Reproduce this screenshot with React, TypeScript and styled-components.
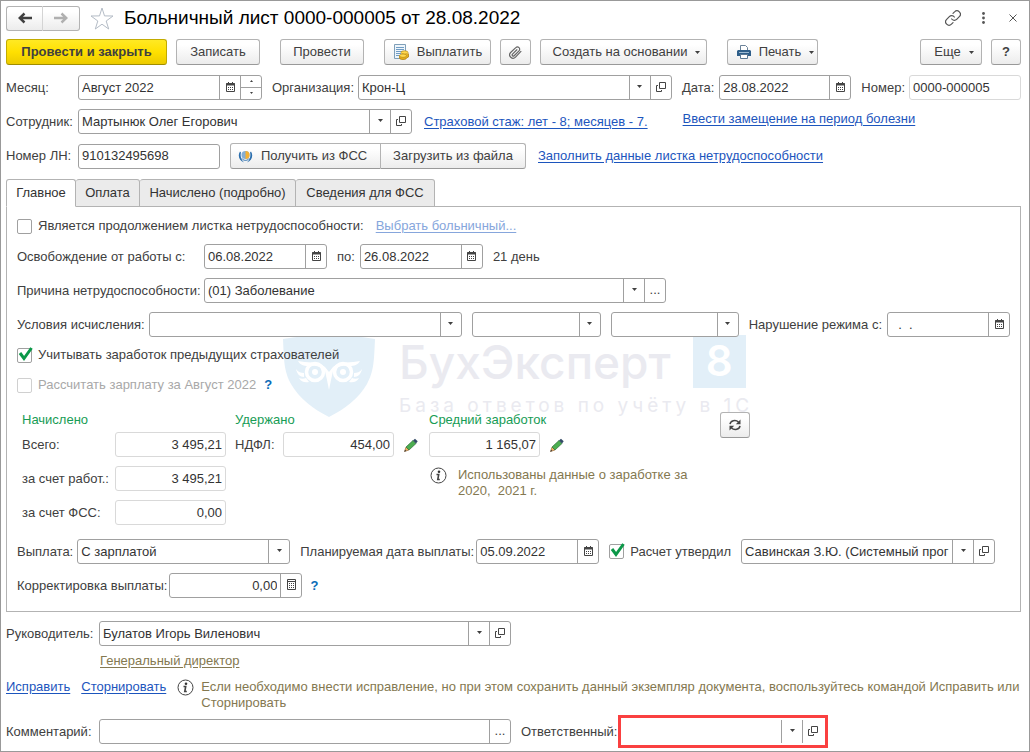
import React from 'react';
import styled, { createGlobalStyle, css } from 'styled-components';

const GlobalStyle = createGlobalStyle`
  *, *::before, *::after { box-sizing: border-box; }
  body {
    margin: 0;
    background: #fff;
    color: #404040;
    font: 13px/16px "Liberation Sans", Arial, sans-serif;
  }
  button, input, select { font: inherit; color: inherit; margin: 0; }
`;

/* ---------- layout ---------- */

const Window = styled.main`
  display: flex;
  flex-direction: column;
  min-height: 100vh;
  min-width: 1000px;
  padding: 0 8px 3px 5px;
  border: 1px solid #999;
`;

const Row = styled.div<{ $top?: number; $gap?: number; $h?: number; $align?: string }>`
  display: flex;
  align-items: ${(p) => p.$align ?? 'center'};
  gap: ${(p) => p.$gap ?? 10}px;
  min-height: ${(p) => p.$h ?? 25}px;
  margin-top: ${(p) => p.$top ?? 9}px;
`;

const Spacer = styled.div`
  flex: 1;
`;

const Pair = styled.div<{ $grow?: boolean; $gap?: number }>`
  display: flex;
  align-items: center;
  gap: ${(p) => p.$gap ?? 4}px;
  ${(p) => p.$grow && 'flex: 1;'}
`;

const Label = styled.label<{ $w?: number }>`
  flex: none;
  white-space: nowrap;
  ${(p) => p.$w && `width: ${p.$w}px;`}
`;

/* ---------- header ---------- */

const Header = styled.header`
  display: flex;
  align-items: center;
  height: 34px;
  margin-right: -7px;
`;

const Title = styled.h1`
  flex: 1;
  margin: 0 0 0 10px;
  color: #000;
  font-size: 19px;
  line-height: 24px;
  font-weight: 400;
`;

const IconButton = styled.button`
  display: grid;
  place-items: center;
  width: 30px;
  height: 24px;
  padding: 0;
  border: 0;
  background: none;
  color: #4d4d4d;
`;

const StarButton = styled(IconButton)`
  width: 24px;
  margin-left: 10px;
`;

/* ---------- buttons ---------- */

const Button = styled.button<{ $w: number; $primary?: boolean; $menu?: boolean }>`
  display: flex;
  flex: none;
  align-items: center;
  justify-content: center;
  gap: 8px;
  width: ${(p) => p.$w}px;
  height: 26px;
  padding: 0 0 0 ${(p) => (p.$menu ? 6 : 0)}px;
  border: 1px solid #b3b3b3;
  border-bottom-color: #999;
  border-radius: 3px;
  background: linear-gradient(#fff 20%, #ececec);
  white-space: nowrap;
  ${(p) =>
    p.$primary &&
    css`
      border-color: #c2ab00;
      border-bottom-color: #a08d00;
      background: linear-gradient(#ffe924, #ffe000 50%, #eccb00);
      font-weight: 700;
    `}
`;

const FssButton = styled(Button)`
  justify-content: flex-start;
  padding-left: 7px;
`;

const ButtonGroup = styled.div`
  display: flex;
  flex: none;
  & > button:first-child { border-radius: 3px 0 0 3px; }
  & > button:last-child { border-radius: 0 3px 3px 0; border-left: 0; }
`;

const NavGroup = styled(ButtonGroup)`
  & > button { border-color: #b3b3b3; height: 25px; }
  & > button:first-child { border-right-color: #d4d4d4; }
`;

const HelpMark = styled.button`
  padding: 0;
  border: 0;
  background: none;
  color: #0a6cb8;
  font-weight: 700;
`;

const Toolbar = styled.div`
  display: flex;
  gap: 20px;
  margin-top: 4px;
`;

const ToolGroup = styled.div`
  display: flex;
  gap: 9px;
`;

/* ---------- fields ---------- */

const Box = styled.div<{ $w?: number; $light?: boolean; $bare?: boolean }>`
  display: flex;
  ${(p) => (p.$w ? `flex: none; width: ${p.$w}px;` : 'flex: 1;')}
  height: 25px;
  border: 1px solid ${(p) => (p.$light ? '#d9d9d9' : '#a0a0a0')};
  border-radius: 3px;
  background: #fff;
  color: #333;
  ${(p) => p.$bare && 'border-color: transparent;'}
`;

const Input = styled.input<{ $right?: boolean }>`
  flex: 1;
  min-width: 0;
  width: 0;
  padding: 0 3px;
  border: 0;
  background: none;
  outline: 0;
  text-align: ${(p) => (p.$right ? 'right' : 'left')};
`;

const Select = styled.select`
  flex: 1;
  min-width: 0;
  width: 0;
  padding: 0 21px 0 3px;
  border: 0;
  outline: 0;
  background: none;
  appearance: none;
`;

const cell = css`
  display: grid;
  flex: none;
  place-items: center;
  width: 21px;
  padding: 0 0 2px;
  border: 0;
  border-left: 1px solid #a0a0a0;
  background: none;
  color: #404040;
`;

const CellButton = styled.button`
  ${cell}
`;

const ArrowCell = styled.span`
  ${cell}
  margin-left: -21px;
  pointer-events: none;
`;

const Spinner = styled.div`
  display: grid;
  flex: none;
  grid-template-rows: 1fr 1fr;
  width: 21px;
  border-left: 1px solid #a0a0a0;
`;

const SpinButton = styled.button`
  display: grid;
  place-items: center;
  padding: 0;
  border: 0;
  background: none;
  &:first-child { border-bottom: 1px solid #a0a0a0; }
`;

const Highlight = styled.div`
  width: 210px;
  padding: 1px;
  border: 3px solid #fa4040;
  display: flex;
`;

const Link = styled.a<{ $tone?: 'muted' | 'olive' }>`
  color: ${(p) => (p.$tone === 'muted' ? '#86a6dc' : p.$tone === 'olive' ? '#847850' : '#1c55bd')};
  text-underline-offset: 2px;
  white-space: nowrap;
`;

const FieldLink = styled(Link)`
  margin-left: 2px;
`;

const RaisedLink = styled(Link)`
  align-self: flex-start;
  margin-left: 25px;
  line-height: 20px;
`;

/* ---------- check boxes ---------- */

const CheckLabel = styled.label<{ $off?: boolean }>`
  display: flex;
  align-items: center;
  gap: 6px;
  white-space: nowrap;
  color: ${(p) => (p.$off ? '#a8a8a8' : 'inherit')};
`;

const CheckWrap = styled.span`
  display: grid;
  & > * { grid-area: 1 / 1; }
  & > svg { pointer-events: none; overflow: visible; }
`;

const CheckInput = styled.input`
  width: 15px;
  height: 15px;
  border: 1px solid #a0a0a0;
  border-radius: 2px;
  background: #fff;
  appearance: none;
  &:disabled { border-color: #d0d0d0; }
`;

/* ---------- tabs and panel ---------- */

const Tabs = styled.div`
  display: flex;
  margin-top: 10px;
`;

const Tab = styled.button<{ $active?: boolean; $w: number }>`
  width: ${(p) => p.$w}px;
  height: 28px;
  margin-bottom: -1px;
  padding: 0;
  border: 1px solid #b3b3b3;
  border-left-width: ${(p) => (p.$active ? 1 : 0)}px;
  border-bottom-color: ${(p) => (p.$active ? '#fff' : '#b3b3b3')};
  border-radius: 3px 3px 0 0;
  background: ${(p) => (p.$active ? '#fff' : '#ebebeb')};
  color: #333;
  white-space: nowrap;
  z-index: 1;
`;

const Panel = styled.section`
  position: relative;
  padding: 0 10px 13px;
  border: 1px solid #b3b3b3;
`;

const Layer = styled.div`
  position: relative;
`;

const Totals = styled.div`
  display: flex;
  align-items: flex-start;
  gap: 9px;
  margin: 15px 0 0 5px;
`;

const TotalsColumn = styled.div<{ $w: number }>`
  width: ${(p) => p.$w}px;
`;

const TotalsTitle = styled.h2`
  margin: 0 0 2px;
  color: #179c55;
  font-size: 13px;
  line-height: 20px;
  font-weight: 400;
`;

const PencilButton = styled(IconButton)`
  width: 16px;
  margin-left: 6px;
`;

const RefreshSlot = styled.div`
  margin-top: 2px;
`;

const Note = styled.div`
  display: flex;
  gap: 7px;
  color: #847850;
  & > svg { flex: none; }
  & > p { margin: 0; white-space: pre-wrap; }
`;

const AverageNote = styled(Note)`
  gap: 11px;
  width: 266px;
  margin: 10px 0 0 1px;
`;

const Indent = styled.div`
  padding-left: 94px;
`;

/* ---------- watermark ---------- */

const Watermark = styled.div`
  position: absolute;
  top: 128px;
  left: 276px;
  display: flex;
  gap: 24px;
  pointer-events: none;
  user-select: none;
`;

const MarkText = styled.div`
  color: #eaeaf0;
  font-family: Inter, "Open Sans", sans-serif;
`;

const MarkName = styled.div`
  display: flex;
  align-items: center;
  gap: 22px;
  height: 53px;
  font-size: 46px;
  line-height: 52px;
  font-weight: 500;
`;

const MarkEight = styled.span`
  width: 53px;
  height: 53px;
  background: #e2eff8;
  color: #fff;
  font-size: 42px;
  font-weight: 600;
  text-align: center;
`;

const MarkSlogan = styled.div`
  margin-top: 6px;
  font-size: 19px;
  line-height: 24px;
  letter-spacing: 4px;
  white-space: nowrap;
`;

/* ---------- icons ---------- */

const CalendarIcon = () => (
  <svg width="9" height="10" viewBox="0 0 9 10" fill="none" stroke="#444">
    <path d="M.5 1.500h8v8h-8z" />
    <path d="M0 2.500h9" strokeWidth="2" />
    <path d="M2.500 0v2M6.500 0v2" />
    <path d="M2 5.500h6M2 7.500h6" strokeDasharray="1 1" />
  </svg>
);

const CalculatorIcon = () => (
  <svg width="9" height="11" viewBox="0 0 9 11" fill="none" stroke="#444">
    <path d="M.5.5h8v10h-8z" />
    <path d="M1 2.500h7" />
    <path d="M2 4.500h6M2 6.500h6M2 8.500h6" strokeDasharray="1 1" />
  </svg>
);

const Caret = () => (
  <svg width="5" height="3" viewBox="0 0 5 3">
    <path d="M0 0h5L2.500 3z" fill="#404040" />
  </svg>
);

const SmallCaret = ({ up }: { up?: boolean }) => (
  <svg width="3" height="2" viewBox="0 0 3 2">
    <path d={up ? 'M0 2h3L1.500 0z' : 'M0 0h3L1.500 2z'} fill="#404040" />
  </svg>
);

const OpenIcon = () => (
  <svg width="10" height="10" viewBox="0 0 10 10" fill="none" stroke="#444">
    <path d="M3.500.5h6v6h-6z" />
    <path d="M2 3.500H.5v6h5V8" />
  </svg>
);

const ArrowIcon = ({ right, color }: { right?: boolean; color: string }) => (
  <svg width="14" height="12" viewBox="0 0 14 12" fill="none" stroke={color} strokeWidth="2.400">
    {right ? <path d="M0 6h12M7.500 1.500L12.300 6 7.500 10.500" /> : <path d="M14 6H2M6.500 1.500L1.700 6l4.800 4.500" />}
  </svg>
);

const StarIcon = () => (
  <svg width="24" height="23" viewBox="0 0 24 23" fill="#fff" stroke="#b4bcc6">
    <path d="M12 1l2.500 7.900 8.500.1-6.800 5 2.500 8L12 17.200 5.300 22l2.500-8L1 9l8.500-.1z" />
  </svg>
);

const LinkIcon = () => (
  <svg width="16" height="16" viewBox="0 0 24 24" fill="none" stroke="#555" strokeWidth="1.800" strokeLinecap="round">
    <path d="M10 13.500a5 5 0 0 0 7.500.5l4-4a5 5 0 0 0-7.200-7.200L12 5" />
    <path d="M14 10.500a5 5 0 0 0-7.500-.5l-4 4a5 5 0 0 0 7.200 7.200L12 19" />
  </svg>
);

const DotsIcon = () => (
  <svg width="3" height="12" viewBox="0 0 3 12" fill="#555">
    <circle cx="1.500" cy="1.500" r="1.400" />
    <circle cx="1.500" cy="6" r="1.400" />
    <circle cx="1.500" cy="10.500" r="1.400" />
  </svg>
);

const CloseIcon = () => (
  <svg width="8" height="8" viewBox="0 0 8 8" stroke="#555">
    <path d="M.5.5l7 7M7.500.5l-7 7" />
  </svg>
);

const PayIcon = () => (
  <svg width="16" height="16" viewBox="0 0 16 16">
    <path d="M1.500.5h11v14h-11z" fill="#eef5fb" stroke="#7f9fb8" />
    <path d="M3 3.500h8M3 5.500h8M3 7.500h8M3 9.500h5M3 11.500h4" stroke="#6f9cc4" />
    <ellipse cx="11.500" cy="8.500" rx="3.500" ry="1.700" fill="#ffd94f" stroke="#b8860b" strokeWidth=".7" />
    <path d="M6.500 12v2c0 2 7 2 7 0l2-1V9.500" fill="#e5ae1d" stroke="#a87808" strokeWidth=".7" />
    <ellipse cx="10" cy="11.700" rx="3.500" ry="1.700" fill="#ffd94f" stroke="#b8860b" strokeWidth=".7" />
  </svg>
);

const ClipIcon = () => (
  <svg width="13" height="13" viewBox="0 0 24 24" fill="none" stroke="#666" strokeWidth="2.200" strokeLinecap="round">
    <path d="M22 10l-10 10.500a6 6 0 0 1-9-8.500L12.500 3a4 4 0 0 1 6 6L9.500 18a2 2 0 0 1-3-3l8-8" />
  </svg>
);

const PrinterIcon = () => (
  <svg width="14" height="14" viewBox="0 0 14 14">
    <path d="M3.500 5V.5h5l2 2V5" fill="#fff" stroke="#6b8299" />
    <path d="M1 5h12l1 1v5H0V6z" fill="#2f5f8a" />
    <path d="M2 7.500h10" stroke="#9dbad3" />
    <path d="M3.500 9.500h7v4h-7z" fill="#fff" stroke="#5a7894" />
  </svg>
);

const FssIcon = () => (
  <svg width="15" height="13" viewBox="0 0 15 13">
    <path d="M2 1.500C-.8 6 1.500 11 6 12.500 3 9.500 2 6 3 2.500z" fill="#2c6fae" />
    <path d="M13 1.500c2.800 4.500.5 9.500-4 11C12 9.500 13 6 12 2.500z" fill="#2c6fae" />
    <circle cx="7.500" cy="5" r="4" fill="#86aed4" />
    <path d="M7.500 1a4 4 0 0 1 0 8z" fill="#f5b133" />
    <path d="M4 8.500c1.500 2.500 5.500 2.500 7 0" fill="none" stroke="#2c6fae" />
  </svg>
);

const PencilIcon = () => (
  <svg width="14" height="14" viewBox="0 0 14 14">
    <path d="M.5 13.500l1.500-4.500 3 3z" fill="#f2b263" stroke="#8a6236" strokeWidth=".6" />
    <path d="M2 9l7-6.500 3 3L5 12z" fill="#4cae50" stroke="#2f6d3a" strokeWidth=".7" />
    <path d="M9 2.500L11 .7l2.700 2.600L12 5.500z" fill="#334a66" />
    <path d="M.3 13.700l.8-2 1.200 1.200z" fill="#333" />
  </svg>
);

const InfoIcon = () => (
  <svg width="17" height="17" viewBox="0 0 17 17" fill="none" stroke="#444">
    <circle cx="8.500" cy="8.500" r="7.500" />
    <circle cx="9" cy="4.800" r="1.300" fill="#333" stroke="none" />
    <path d="M6.500 7.500h2.200L7.800 12.500h2" strokeWidth="1.600" />
  </svg>
);

const RefreshIcon = () => (
  <svg width="12" height="12" viewBox="0 0 12 12" fill="none" stroke="#444" strokeWidth="1.500">
    <path d="M1 5.200C1.500 1.500 6.500.2 9.500 3" />
    <path d="M11.500.5v4.700H6.800z" fill="#444" stroke="none" />
    <path d="M11 6.800C10.500 10.500 5.500 11.800 2.500 9" />
    <path d="M.5 11.500V6.800h4.700z" fill="#444" stroke="none" />
  </svg>
);

const OwlShield = () => (
  <svg width="92" height="82" viewBox="0 0 92 82">
    <path d="M0 4C30-1 62-1 92 4c-1 22-1 32-8 45C76 63 62 74 46 82 30 74 16 63 8 49 1 36 1 26 0 4z" fill="#e2eff8" />
    <g fill="none" stroke="#fff" strokeWidth="3.500">
      <circle cx="32" cy="37" r="8.500" />
      <circle cx="60" cy="37" r="8.500" />
    </g>
    <g fill="#fff">
      <circle cx="32" cy="37" r="3" />
      <circle cx="60" cy="37" r="3" />
      <path d="M15 26c8 2 20 0 27 6l4 5 4-5c7-6 19-4 27-6-2 4-6 5-10 5-8-1-14 1-17 5l-2 9-2 10-2-10-2-9c-3-4-9-6-17-5-4 0-8-1-10-5z" />
      <path d="M13 34c2 3 5 4 8 4v4c-4 0-7-3-8-8zM79 34c-2 3-5 4-8 4v4c4 0 7-3 8-8z" />
      <path d="M16 43c2 1 5 1 7 0l3 4c-4 1-8 0-10-4zM76 43c-2 1-5 1-7 0l-3 4c4 1 8 0 10-4z" />
    </g>
  </svg>
);

/* ---------- composite controls ---------- */

type FieldProps = { id: string; value?: string; w?: number; label?: string };

const Combo = ({
  id,
  value = '',
  w,
  label,
  extra,
  bare,
}: FieldProps & { extra?: 'open' | 'dots'; bare?: boolean }) => (
  <Box $w={w} $bare={bare}>
    <Select id={id} aria-label={label} defaultValue={value}>
      <option value={value}>{value}</option>
    </Select>
    <ArrowCell aria-hidden>
      <Caret />
    </ArrowCell>
    {extra && (
      <CellButton type="button" aria-label="Открыть">
        {extra === 'open' ? <OpenIcon /> : '...'}
      </CellButton>
    )}
  </Box>
);

const DateField = ({ id, value, w, label }: FieldProps) => (
  <Box $w={w}>
    <Input id={id} aria-label={label} defaultValue={value} />
    <CellButton type="button" aria-label="Календарь">
      <CalendarIcon />
    </CellButton>
  </Box>
);

const Check = ({ text, checked, disabled }: { text: string; checked?: boolean; disabled?: boolean }) => (
  <CheckLabel $off={disabled}>
    <CheckWrap>
      <CheckInput type="checkbox" defaultChecked={checked} disabled={disabled} />
      {checked && (
        <svg width="15" height="15" viewBox="0 0 15 15" fill="none" stroke="#0b9848" strokeWidth="3">
          <path d="M3 5l4 5.500L14.500 0" />
        </svg>
      )}
    </CheckWrap>
    {text}
  </CheckLabel>
);

const Amount = ({ id, label, labelWidth, value }: { id: string; label: string; labelWidth: number; value: string }) => (
  <Pair $gap={0}>
    <Label htmlFor={id} $w={labelWidth}>
      {label}
    </Label>
    <Box $w={111} $light>
      <Input id={id} $right readOnly defaultValue={value} />
    </Box>
  </Pair>
);

/* ---------- page ---------- */

export default function App() {
  return (
    <>
      <GlobalStyle />
      <Window>
        <Header>
          <NavGroup>
            <Button $w={37} aria-label="Назад">
              <ArrowIcon color="#404040" />
            </Button>
            <Button $w={37} aria-label="Вперед">
              <ArrowIcon right color="#b0b0b0" />
            </Button>
          </NavGroup>
          <StarButton aria-label="В избранное">
            <StarIcon />
          </StarButton>
          <Title>Больничный лист 0000-000005 от 28.08.2022</Title>
          <IconButton aria-label="Ссылка">
            <LinkIcon />
          </IconButton>
          <IconButton aria-label="Меню">
            <DotsIcon />
          </IconButton>
          <IconButton aria-label="Закрыть">
            <CloseIcon />
          </IconButton>
        </Header>

        <Toolbar>
          <ToolGroup>
            <Button $w={161} $primary>
              Провести и закрыть
            </Button>
            <Button $w={84}>Записать</Button>
          </ToolGroup>
          <Button $w={84}>Провести</Button>
          <ToolGroup>
            <Button $w={107}>
              <PayIcon />
              Выплатить
            </Button>
            <Button $w={31} aria-label="Вложения">
              <ClipIcon />
            </Button>
            <Button $w={167} $menu>
              Создать на основании
              <Caret />
            </Button>
          </ToolGroup>
          <Button $w={91} $menu>
            <PrinterIcon />
            Печать
            <Caret />
          </Button>
          <Spacer />
          <ToolGroup>
            <Button $w={62} $menu>
              Еще
              <Caret />
            </Button>
            <Button $w={30} aria-label="Справка">
              <b>?</b>
            </Button>
          </ToolGroup>
        </Toolbar>

        <Row $top={10}>
          <Pair $gap={0}>
            <Label htmlFor="month" $w={72}>
              Месяц:
            </Label>
            <Box $w={184}>
              <Input id="month" defaultValue="Август 2022" />
              <CellButton type="button" aria-label="Календарь">
                <CalendarIcon />
              </CellButton>
              <Spinner>
                <SpinButton aria-label="Больше">
                  <SmallCaret up />
                </SpinButton>
                <SpinButton aria-label="Меньше">
                  <SmallCaret />
                </SpinButton>
              </Spinner>
            </Box>
          </Pair>
          <Pair $grow>
            <Label htmlFor="org" $w={82}>
              Организация:
            </Label>
            <Combo id="org" value="Крон-Ц" extra="open" />
          </Pair>
          <Pair $gap={5}>
            <Label htmlFor="date">Дата:</Label>
            <DateField id="date" value="28.08.2022" w={132} />
          </Pair>
          <Pair>
            <Label htmlFor="number">Номер:</Label>
            <Box $w={112} $light>
              <Input id="number" readOnly defaultValue="0000-000005" />
            </Box>
          </Pair>
        </Row>

        <Row>
          <Pair $gap={0}>
            <Label htmlFor="employee" $w={72}>
              Сотрудник:
            </Label>
            <Combo id="employee" value="Мартынюк Олег Егорович" w={334} extra="open" />
          </Pair>
          <FieldLink href="#stazh">Страховой стаж: лет - 8; месяцев - 7.</FieldLink>
          <RaisedLink href="#substitution">Ввести замещение на период болезни</RaisedLink>
        </Row>

        <Row>
          <Pair $gap={0}>
            <Label htmlFor="ln" $w={72}>
              Номер ЛН:
            </Label>
            <Box $w={142}>
              <Input id="ln" defaultValue="910132495698" />
            </Box>
          </Pair>
          <ButtonGroup>
            <FssButton $w={151}>
              <FssIcon />
              Получить из ФСС
            </FssButton>
            <Button $w={145}>Загрузить из файла</Button>
          </ButtonGroup>
          <FieldLink href="#fill">Заполнить данные листка нетрудоспособности</FieldLink>
        </Row>

        <Tabs role="tablist">
          <Tab role="tab" aria-selected $active $w={70}>
            Главное
          </Tab>
          <Tab role="tab" $w={64}>
            Оплата
          </Tab>
          <Tab role="tab" $w={156}>
            Начислено (подробно)
          </Tab>
          <Tab role="tab" $w={139}>
            Сведения для ФСС
          </Tab>
        </Tabs>

        <Panel>
          <Watermark aria-hidden>
            <OwlShield />
            <MarkText>
              <MarkName>
                БухЭксперт
                <MarkEight>8</MarkEight>
              </MarkName>
              <MarkSlogan>База ответов по учёту в 1С</MarkSlogan>
            </MarkText>
          </Watermark>
          <Layer>
            <Row $h={20} $gap={12}>
              <Check text="Является продолжением листка нетрудоспособности:" />
              <Link href="#choose" $tone="muted">
                Выбрать больничный...
              </Link>
            </Row>
            <Row $top={8}>
              <Pair $gap={0}>
                <Label htmlFor="from" $w={187}>
                  Освобождение от работы с:
                </Label>
                <DateField id="from" value="06.08.2022" w={123} />
              </Pair>
              <Pair $gap={5}>
                <Label htmlFor="to">по:</Label>
                <DateField id="to" value="26.08.2022" w={123} />
              </Pair>
              <span>21 день</span>
            </Row>
            <Row $gap={0}>
              <Label htmlFor="reason" $w={187}>
                Причина нетрудоспособности:
              </Label>
              <Combo id="reason" value="(01) Заболевание" w={462} extra="dots" />
            </Row>
            <Row>
              <Pair $grow>
                <Label htmlFor="cond1">Условия исчисления:</Label>
                <Combo id="cond1" />
              </Pair>
              <Combo id="cond2" label="Условие 2" w={129} />
              <Combo id="cond3" label="Условие 3" w={128} />
              <Pair $gap={5}>
                <Label htmlFor="violation">Нарушение режима с:</Label>
                <DateField id="violation" value="  .  ." w={123} />
              </Pair>
            </Row>
            <Row $top={8} $h={20}>
              <Check text="Учитывать заработок предыдущих страхователей" checked />
            </Row>
            <Row $top={10} $h={20} $gap={8}>
              <Check text="Рассчитать зарплату за Август 2022" disabled />
              <HelpMark aria-label="Подсказка">?</HelpMark>
            </Row>

            <Totals>
              <TotalsColumn $w={204}>
                <TotalsTitle>Начислено</TotalsTitle>
                <Amount id="total" label="Всего:" labelWidth={93} value="3 495,21" />
                <Row>
                  <Amount id="employer" label="за счет работ.:" labelWidth={93} value="3 495,21" />
                </Row>
                <Row>
                  <Amount id="fss" label="за счет ФСС:" labelWidth={93} value="0,00" />
                </Row>
              </TotalsColumn>
              <TotalsColumn $w={185}>
                <TotalsTitle>Удержано</TotalsTitle>
                <Pair $gap={3}>
                  <Amount id="ndfl" label="НДФЛ:" labelWidth={48} value="454,00" />
                  <PencilButton aria-label="Изменить">
                    <PencilIcon />
                  </PencilButton>
                </Pair>
              </TotalsColumn>
              <TotalsColumn $w={282}>
                <TotalsTitle>Средний заработок</TotalsTitle>
                <Pair $gap={3}>
                  <Box $w={111} $light>
                    <Input aria-label="Средний заработок" $right readOnly defaultValue="1 165,07" />
                  </Box>
                  <PencilButton aria-label="Изменить">
                    <PencilIcon />
                  </PencilButton>
                </Pair>
                <AverageNote>
                  <InfoIcon />
                  <p>Использованы данные о заработке за 2020,  2021 г.</p>
                </AverageNote>
              </TotalsColumn>
              <RefreshSlot>
                <Button $w={30} aria-label="Обновить">
                  <RefreshIcon />
                </Button>
              </RefreshSlot>
            </Totals>

            <Row $top={14}>
              <Pair>
                <Label htmlFor="payout">Выплата:</Label>
                <Combo id="payout" value="С зарплатой" w={213} />
              </Pair>
              <Pair $gap={2}>
                <Label htmlFor="paydate">Планируемая дата выплаты:</Label>
                <DateField id="paydate" value="05.09.2022" w={123} />
              </Pair>
              <Check text="Расчет утвердил" checked />
              <Combo id="approver" label="Утвердил" value="Савинская З.Ю. (Системный прог" w={254} extra="open" />
            </Row>
            <Row $gap={8}>
              <Pair $gap={2}>
                <Label htmlFor="correction">Корректировка выплаты:</Label>
                <Box $w={133}>
                  <Input id="correction" $right defaultValue="0,00" />
                  <CellButton type="button" aria-label="Калькулятор">
                    <CalculatorIcon />
                  </CellButton>
                </Box>
              </Pair>
              <HelpMark aria-label="Подсказка">?</HelpMark>
            </Row>
          </Layer>
        </Panel>

        <Row $gap={0}>
          <Label htmlFor="head" $w={93}>
            Руководитель:
          </Label>
          <Combo id="head" value="Булатов Игорь Виленович" w={412} extra="open" />
        </Row>
        <Row $top={5} $h={20}>
          <Indent>
            <Link href="#position" $tone="olive">
              Генеральный директор
            </Link>
          </Indent>
        </Row>
        <Row $top={8} $gap={11} $h={32} $align="flex-start">
          <Link href="#fix">Исправить</Link>
          <Link href="#storno">Сторнировать</Link>
          <Note>
            <InfoIcon />
            <p>
              Если необходимо внести исправление, но при этом сохранить данный экземпляр документа, воспользуйтесь
              командой Исправить или Сторнировать
            </p>
          </Note>
        </Row>
        <Row $top={4} $h={33}>
          <Pair $gap={0}>
            <Label htmlFor="comment" $w={93}>
              Комментарий:
            </Label>
            <Box $w={412}>
              <Input id="comment" />
              <CellButton type="button" aria-label="Открыть">
                ...
              </CellButton>
            </Box>
          </Pair>
          <Pair $gap={1}>
            <Label htmlFor="responsible">Ответственный:</Label>
            <Highlight>
              <Combo id="responsible" extra="open" bare />
            </Highlight>
          </Pair>
        </Row>
      </Window>
    </>
  );
}
